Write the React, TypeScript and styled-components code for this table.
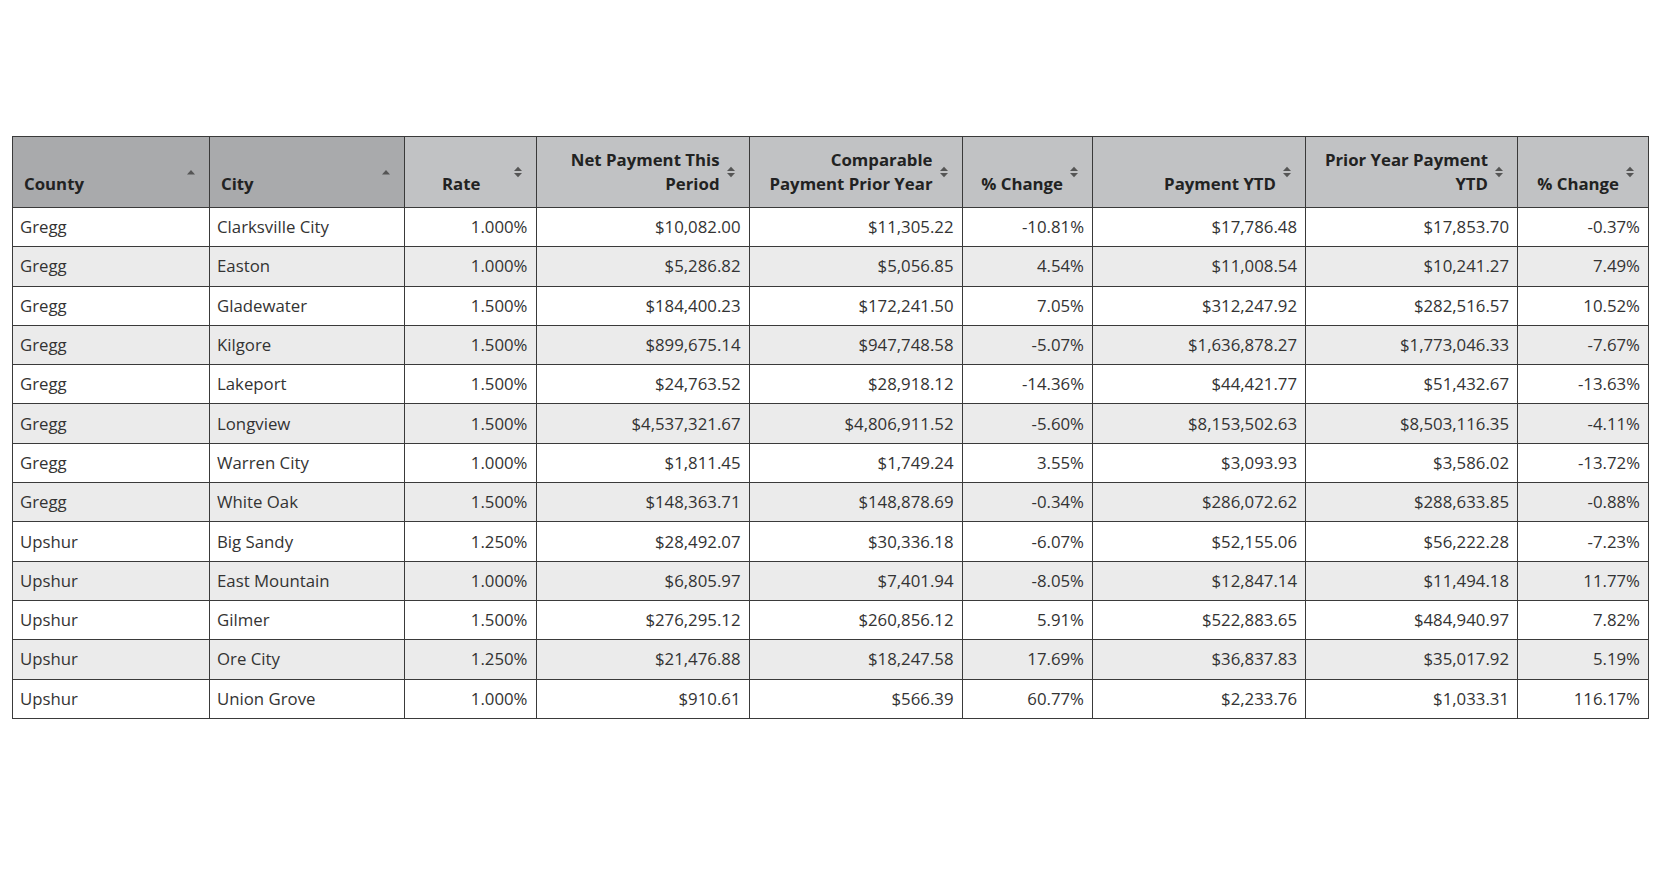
import React from "react";
import styled, { createGlobalStyle } from "styled-components";

const GlobalStyle = createGlobalStyle`
  html, body { margin: 0; padding: 0; background: #ffffff; }
  body { font-family: "Open Sans", "Liberation Sans", sans-serif; color: #333; }
`;

const Page = styled.div`
  padding: 136px 14px 0 12px;
  width: 1636px;
`;

const Table = styled.table`
  width: 1636px;
  table-layout: fixed;
  border-collapse: collapse;
  border: 1px solid #3a3a3a;
  font-family: "Open Sans", "Liberation Sans", sans-serif;
  font-size: 16.8px;
`;

const HeadRow = styled.tr`
  height: 71px;
`;

type Align = "left" | "center" | "right";

const Th = styled.th<{ $sorted?: boolean; $align: Align }>`
  position: relative;
  background: ${(p) => (p.$sorted ? "#a9aaac" : "#c1c2c4")};
  border: 1px solid #3a3a3a;
  padding: 10px 29px 11px 11px;
  text-align: ${(p) => p.$align};
  vertical-align: bottom;
  font-weight: 700;
  color: #222;
  line-height: 24px;
  white-space: nowrap;
`;

const SortIcon = styled.svg`
  position: absolute;
  right: 13px;
  top: 50%;
  transform: translateY(-50%);
`;

const Row = styled.tr<{ $alt: boolean }>`
  height: 39.3px;
  background: ${(p) => (p.$alt ? "#ebebeb" : "#ffffff")};
`;

const Td = styled.td<{ $align: Align }>`
  border: 1px solid #3a3a3a;
  padding: 0 8px 0 7px;
  text-align: ${(p) => p.$align};
  vertical-align: middle;
  color: #333;
  line-height: 22px;
  white-space: nowrap;
`;

const AscIcon = () => (
  <SortIcon width="10" height="6" viewBox="0 0 10 6">
    <path d="M1 5.5 L5 1 L9 5.5 Z" fill="#555" />
  </SortIcon>
);

const BothIcon = () => (
  <SortIcon width="10" height="12" viewBox="0 0 10 12">
    <path d="M1 5 L5 0.8 L9 5 Z" fill="#555" />
    <path d="M1 7 L5 11.2 L9 7 Z" fill="#555" />
  </SortIcon>
);

type Col = { label: React.ReactNode; width: number; headAlign: Align; cellAlign: Align; sorted?: boolean };

const cols: Col[] = [
  { label: "County", width: 197, headAlign: "left", cellAlign: "left", sorted: true },
  { label: "City", width: 195, headAlign: "left", cellAlign: "left", sorted: true },
  { label: "Rate", width: 131.5, headAlign: "center", cellAlign: "right" },
  { label: <>Net Payment This<br />Period</>, width: 213, headAlign: "right", cellAlign: "right" },
  { label: <>Comparable<br />Payment Prior Year</>, width: 213, headAlign: "right", cellAlign: "right" },
  { label: "% Change", width: 130.5, headAlign: "right", cellAlign: "right" },
  { label: "Payment YTD", width: 213, headAlign: "right", cellAlign: "right" },
  { label: <>Prior Year Payment<br />YTD</>, width: 212, headAlign: "right", cellAlign: "right" },
  { label: "% Change", width: 131, headAlign: "right", cellAlign: "right" },
];

const rows: string[][] = [
  ["Gregg", "Clarksville City", "1.000%", "$10,082.00", "$11,305.22", "-10.81%", "$17,786.48", "$17,853.70", "-0.37%"],
  ["Gregg", "Easton", "1.000%", "$5,286.82", "$5,056.85", "4.54%", "$11,008.54", "$10,241.27", "7.49%"],
  ["Gregg", "Gladewater", "1.500%", "$184,400.23", "$172,241.50", "7.05%", "$312,247.92", "$282,516.57", "10.52%"],
  ["Gregg", "Kilgore", "1.500%", "$899,675.14", "$947,748.58", "-5.07%", "$1,636,878.27", "$1,773,046.33", "-7.67%"],
  ["Gregg", "Lakeport", "1.500%", "$24,763.52", "$28,918.12", "-14.36%", "$44,421.77", "$51,432.67", "-13.63%"],
  ["Gregg", "Longview", "1.500%", "$4,537,321.67", "$4,806,911.52", "-5.60%", "$8,153,502.63", "$8,503,116.35", "-4.11%"],
  ["Gregg", "Warren City", "1.000%", "$1,811.45", "$1,749.24", "3.55%", "$3,093.93", "$3,586.02", "-13.72%"],
  ["Gregg", "White Oak", "1.500%", "$148,363.71", "$148,878.69", "-0.34%", "$286,072.62", "$288,633.85", "-0.88%"],
  ["Upshur", "Big Sandy", "1.250%", "$28,492.07", "$30,336.18", "-6.07%", "$52,155.06", "$56,222.28", "-7.23%"],
  ["Upshur", "East Mountain", "1.000%", "$6,805.97", "$7,401.94", "-8.05%", "$12,847.14", "$11,494.18", "11.77%"],
  ["Upshur", "Gilmer", "1.500%", "$276,295.12", "$260,856.12", "5.91%", "$522,883.65", "$484,940.97", "7.82%"],
  ["Upshur", "Ore City", "1.250%", "$21,476.88", "$18,247.58", "17.69%", "$36,837.83", "$35,017.92", "5.19%"],
  ["Upshur", "Union Grove", "1.000%", "$910.61", "$566.39", "60.77%", "$2,233.76", "$1,033.31", "116.17%"],
];

export default function App() {
  return (
    <>
      <GlobalStyle />
      <Page>
        <Table>
          <colgroup>
            {cols.map((c, i) => (
              <col key={i} style={{ width: `${c.width}px` }} />
            ))}
          </colgroup>
          <thead>
            <HeadRow>
              {cols.map((c, i) => (
                <Th key={i} $sorted={c.sorted} $align={c.headAlign}>
                  {c.label}
                  {c.sorted ? <AscIcon /> : <BothIcon />}
                </Th>
              ))}
            </HeadRow>
          </thead>
          <tbody>
            {rows.map((r, ri) => (
              <Row key={ri} $alt={ri % 2 === 1}>
                {r.map((v, ci) => (
                  <Td key={ci} $align={cols[ci].cellAlign}>
                    {v}
                  </Td>
                ))}
              </Row>
            ))}
          </tbody>
        </Table>
      </Page>
    </>
  );
}
